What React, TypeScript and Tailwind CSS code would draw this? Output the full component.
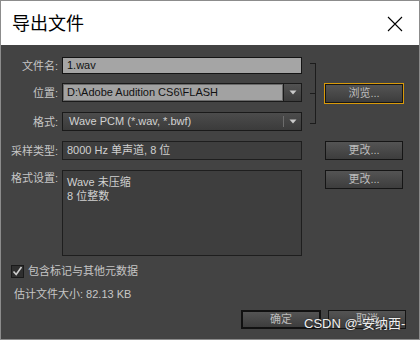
import React from 'react'

const font = "font-['Liberation_Sans','Noto_Sans_CJK_SC',sans-serif]"

function Arrow() {
  return (
    <svg width="8" height="5" viewBox="0 0 8 5" className="block">
      <path d="M0.5 0.5 H7.5 L4 4.5 Z" fill="#c9c9c9" />
    </svg>
  )
}

function Label({ text, top }: { text: string; top?: boolean }) {
  return (
    <div className={`w-[46px] shrink-0 flex justify-end whitespace-nowrap text-[11px] text-[#c6c6c6] leading-[14px] ${top ? 'pt-[1px]' : ''}`}>
      {text}
    </div>
  )
}

function DarkButton({ children, w = 'w-[78px]', def }: { children: React.ReactNode; w?: string; def?: boolean }) {
  return (
    <button
      type="button"
      className={`${w} h-[19px] shrink-0 flex items-center justify-center text-[11px] text-[#bcbcbc] leading-none bg-gradient-to-b from-[#545454] to-[#3d3d3d] ${
        def ? 'border-2 border-[#111]' : 'border border-[#151515]'
      }`}
    >
      {children}
    </button>
  )
}

export default function App() {
  return (
    <div className={`w-[420px] h-[340px] border border-[#8c8c8c] flex flex-col ${font}`}>
      {/* title bar */}
      <div className="h-[44px] shrink-0 bg-white flex items-center justify-between pl-[11px] pr-[16px]">
        <span className="text-[18px] leading-none text-black font-['Noto_Sans_CJK_SC',sans-serif] pb-[2px]">导出文件</span>
        <svg width="16" height="16" viewBox="0 0 16 16" className="block mt-[1px]">
          <path d="M1 1 L15 15 M15 1 L1 15" stroke="#000" strokeWidth="1.1" />
        </svg>
      </div>

      {/* body */}
      <div className="flex-1 bg-[#434343] relative pl-[11px] pt-[12px] flex flex-col">
        <div className="flex">
          <div className="flex flex-col">
            <div className="flex items-center gap-[4px]">
              <Label text="文件名:" />
              <div className="w-[240px] h-[17px] bg-[#a5a5a5] border border-[#141414] flex items-center pl-[4px] text-[11px] text-[#111]">
                1.wav
              </div>
            </div>
            <div className="flex items-center gap-[4px] mt-[9px]">
              <Label text="位置:" />
              <div className="w-[240px] h-[19px] border border-[#1a1a1a] flex">
                <div className="flex-1 bg-[#a2a2a2] border border-[#6b6b6b] flex items-center pl-[3px] text-[11px] text-[#111] whitespace-nowrap overflow-hidden">
                  D:\Adobe Audition CS6\FLASH
                </div>
                <div className="w-[18px] border-l border-[#1a1a1a] bg-gradient-to-b from-[#525252] to-[#3c3c3c] flex items-center justify-center">
                  <Arrow />
                </div>
              </div>
            </div>
            <div className="flex items-center gap-[4px] mt-[10px]">
              <Label text="格式:" />
              <div className="w-[240px] h-[19px] border border-[#1a1a1a] bg-gradient-to-b from-[#4c4c4c] to-[#3b3b3b] flex">
                <div className="flex-1 flex items-center pl-[6px] text-[11px] text-[#d2d2d2] whitespace-nowrap">
                  Wave PCM (*.wav, *.bwf)
                </div>
                <div className="w-px my-[3px] bg-[#6c6c6c]" />
                <div className="w-[17px] flex items-center justify-center">
                  <Arrow />
                </div>
              </div>
            </div>
          </div>

          {/* bracket */}
          <div className="ml-[8px] mt-[6px] w-[6px] h-[61px] border-t border-b border-r border-[#1c1c1c] flex items-center">
            <div className="w-full h-px bg-[#1c1c1c]" />
          </div>

          <div className="ml-[8px] mt-[26px] self-start border border-[#d99a0a]">
            <DarkButton>浏览...</DarkButton>
          </div>
        </div>

        <div className="flex items-center mt-[10px]">
          <div className="flex items-center gap-[4px]">
            <Label text="采样类型:" />
            <div className="w-[240px] h-[19px] bg-[#3e3e3e] border border-[#1e1e1e] flex items-center pl-[4px] text-[11px] text-[#d0d0d0]">
              8000 Hz 单声道, 8 位
            </div>
          </div>
          <div className="ml-[23px]">
            <DarkButton>更改...</DarkButton>
          </div>
        </div>

        <div className="flex items-start mt-[10px]">
          <div className="flex items-start gap-[4px]">
            <Label text="格式设置:" top />
            <div className="w-[240px] h-[86px] bg-[#3e3e3e] border border-[#1e1e1e] pl-[4px] pt-[4px] text-[11px] leading-[14px] text-[#d0d0d0]">
              <div>Wave 未压缩</div>
              <div>8 位整数</div>
            </div>
          </div>
          <div className="ml-[23px]">
            <DarkButton>更改...</DarkButton>
          </div>
        </div>

        <div className="flex items-center mt-[8px] -ml-[1px]">
          <div className="w-[13px] h-[13px] border border-[#1a1a1a] bg-[#2f2f2f] flex items-center justify-center">
            <svg width="11" height="11" viewBox="0 0 11 11" className="block">
              <path d="M1.5 5.5 L4.2 8.5 L9.5 1" stroke="#cfcfcf" strokeWidth="1.6" fill="none" />
            </svg>
          </div>
          <span className="ml-[4px] text-[11px] leading-[14px] text-[#c6c6c6]">包含标记与其他元数据</span>
        </div>

        <div className="mt-[9px] ml-[2px] text-[11px] leading-[14px] text-[#c6c6c6]">估计文件大小: 82.13 KB</div>

        <div className="flex justify-end gap-[7px] pr-[13px] mt-[9px]">
          <DarkButton w="w-[80px]" def>确定</DarkButton>
          <DarkButton>取消</DarkButton>
        </div>

        <div className="absolute left-[303px] top-[271px] text-[13px] leading-[15px] text-[#f0f0f0] [text-shadow:0_0_2px_rgba(0,0,0,0.6)] whitespace-nowrap font-['Liberation_Sans','Noto_Sans_CJK_SC',sans-serif]">
          CSDN @-安纳西-
        </div>
      </div>
    </div>
  )
}
